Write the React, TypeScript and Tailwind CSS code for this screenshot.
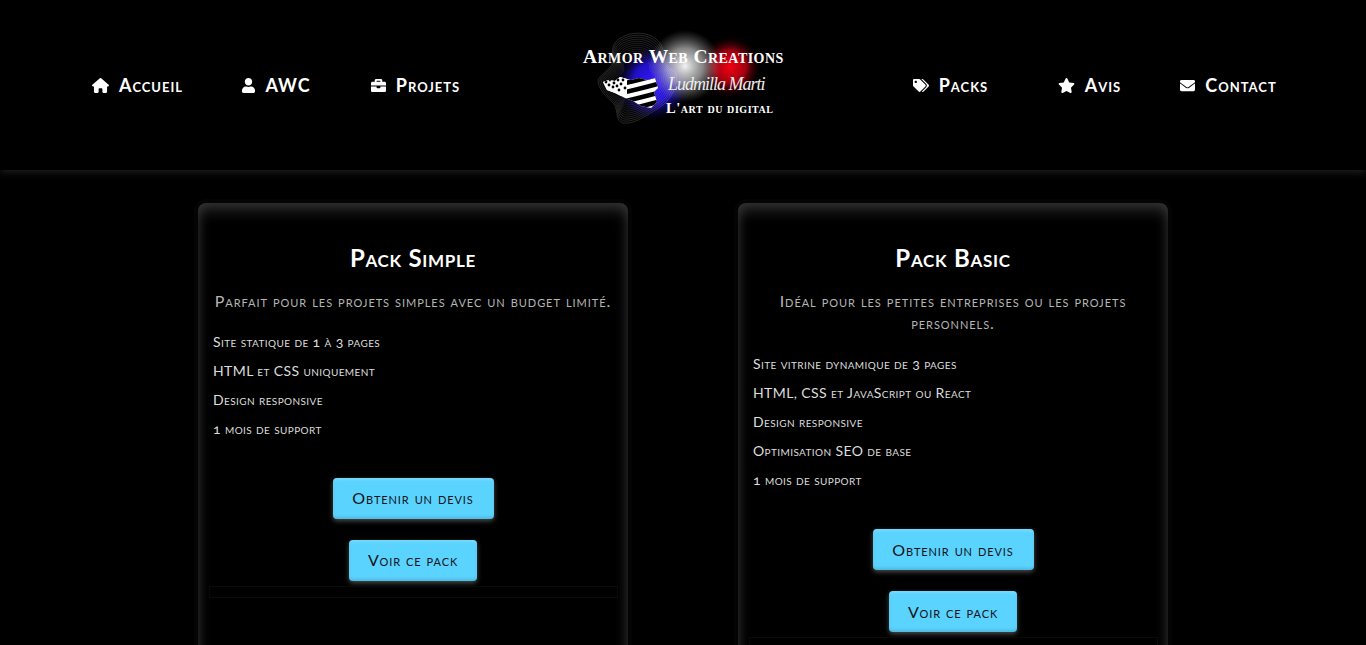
import React from 'react';
import { FaBriefcase, FaEnvelope, FaStar, FaTags, FaUser } from 'react-icons/fa';
import { FaHouse } from 'react-icons/fa6';

const leftLinks = [
  { label: 'Accueil', icon: FaHouse, iconClass: 'h-[15px] w-[17px]' },
  { label: 'AWC', icon: FaUser, iconClass: 'h-[15px] w-[13px]' },
  { label: 'Projets', icon: FaBriefcase, iconClass: 'h-[15px] w-[15px]' },
];

const rightLinks = [
  { label: 'Packs', icon: FaTags, iconClass: 'h-[13px] w-[16px]' },
  { label: 'Avis', icon: FaStar, iconClass: 'h-[15px] w-[17px]' },
  { label: 'Contact', icon: FaEnvelope, iconClass: 'h-[15px] w-[15px]' },
];

const packs = [
  {
    title: 'Pack Simple',
    description: 'Parfait pour les projets simples avec un budget limité.',
    features: ['Site statique de 1 à 3 pages', 'HTML et CSS uniquement', 'Design responsive', '1 mois de support'],
  },
  {
    title: 'Pack Basic',
    description: 'Idéal pour les petites entreprises ou les projets personnels.',
    features: [
      'Site vitrine dynamique de 3 pages',
      'HTML, CSS et JavaScript ou React',
      'Design responsive',
      'Optimisation SEO de base',
      '1 mois de support',
    ],
  },
];

function NavLink({
  label,
  icon: Icon,
  iconClass,
}: {
  label: string;
  icon: React.ComponentType<{ className?: string }>;
  iconClass: string;
}) {
  return (
    <a className="flex items-center justify-center gap-[10px] text-[18px] font-bold tracking-[1px] text-white">
      <Icon className={iconClass} />
      {label}
    </a>
  );
}

function Logo() {
  const contours = [0, 1, 2, 3, 4, 5, 6, 7, 8, 9, 10, 11];
  const spots = [
    [43, 62], [47, 60], [51, 63], [46, 65], [50, 67], [55, 60], [58, 64], [54, 66], [60, 60], [56, 70], [62, 68],
  ];
  return (
    <div className="relative mb-[10px] h-[120px] w-[240px] shrink-0 text-white">
      <svg viewBox="0 0 240 120" className="absolute inset-0 h-full w-full">
        <defs>
          <radialGradient id="blue">
            <stop offset="0" stopColor="#3418ff" />
            <stop offset="0.5" stopColor="#2010c4" />
            <stop offset="1" stopColor="#000" stopOpacity="0" />
          </radialGradient>
          <radialGradient id="white">
            <stop offset="0" stopColor="#fff" stopOpacity="0.95" />
            <stop offset="0.5" stopColor="#ccc" stopOpacity="0.65" />
            <stop offset="1" stopColor="#888" stopOpacity="0" />
          </radialGradient>
          <radialGradient id="red">
            <stop offset="0" stopColor="#f00012" />
            <stop offset="0.5" stopColor="#a00010" />
            <stop offset="1" stopColor="#000" stopOpacity="0" />
          </radialGradient>
          <clipPath id="breizh">
            <path d="M40 62 L46 60 L52 61 L57 57 L64 59 L68 60 L76 58 L84 60 L92 58 L95 68 L91 72 L94 82 L88 88 L78 86 L70 81 L62 78 L52 73 L44 70 Z" />
          </clipPath>
        </defs>
        <circle cx="90" cy="63" r="40" fill="url(#blue)" />
        <circle cx="167" cy="47" r="32" fill="url(#red)" />
        <circle cx="122" cy="46" r="36" fill="url(#white)" />
        {contours.map((i) => (
          <path
            key={i}
            fill="none"
            stroke="#fff"
            strokeOpacity="0.45"
            strokeWidth="0.35"
            transform={`translate(72 58) scale(${1 - i * 0.045}) translate(-72 -58)`}
            d="M52 23 C60 12 85 8 97 23 C104 34 96 42 110 50 C118 54 112 78 97 87 C85 95 70 105 60 103 C50 100 58 88 47 80 C38 72 32 62 37 57 C44 50 50 46 50 40 C50 34 48 28 52 23 Z"
          />
        ))}
        <g clipPath="url(#breizh)">
          <rect x="36" y="52" width="62" height="40" fill="#fff" />
          {[58, 67, 76, 85, 94].map((y) => (
            <path key={y} d={`M58 ${y + 6} Q76 ${y + 2} 98 ${y - 4}`} fill="none" stroke="#000" strokeWidth="4.5" />
          ))}
          <path d="M36 52 H64 V76 H36 Z" fill="#fff" />
          {spots.map(([cx, cy]) => (
            <circle key={`${cx}-${cy}`} cx={cx} cy={cy} r="1.4" fill="#000" />
          ))}
        </g>
      </svg>
      <span className="absolute left-[20px] top-[25px] whitespace-nowrap font-['Liberation_Serif',serif] text-[19.5px] font-bold leading-6 tracking-[0.45px]">
        Armor Web Creations
      </span>
      <span className="absolute left-[105px] top-[50px] whitespace-nowrap font-['Liberation_Serif',serif] text-[18px] font-light italic leading-7 tracking-[-1px] text-[#eeeeee] [font-variant-caps:normal]">
        Ludmilla Marti
      </span>
      <span className="absolute left-[103px] top-[80px] whitespace-nowrap font-['Liberation_Serif',serif] text-[14.5px] font-bold leading-4 tracking-[0.55px]">
        L'art du digital
      </span>
    </div>
  );
}

function PackCard({ title, description, features }: (typeof packs)[number]) {
  return (
    <article className="flex h-[520px] w-[430px] flex-col items-center rounded-lg bg-black px-[15px] pt-[41px] shadow-[inset_0_0_12px_rgba(255,255,255,0.1),inset_0_8px_14px_rgba(255,255,255,0.15),0_0_0_4px_#040404]">
      <h2 className="text-[24px] font-bold leading-7 tracking-[0.7px] text-white">{title}</h2>
      <p className="mt-[18px] text-center text-[16px] leading-[22.4px] tracking-[0.95px] text-[#b5b5b5]">{description}</p>
      <ul className="mt-[14.2px] flex w-full flex-col text-[14px] leading-[29px] tracking-[0.4px] text-[#dddddd]">
        {features.map((feature) => (
          <li key={feature}>{feature}</li>
        ))}
      </ul>
      <a className="mt-[35px] flex h-[41px] w-[161px] items-center justify-center rounded-[4px] bg-[#5ad3fe] text-[16px] tracking-[0.9px] text-[#101418] shadow-[inset_0_2px_3px_rgba(255,255,255,0.18),inset_0_-2px_3px_rgba(0,0,0,0.12),0_2px_5px_rgba(255,255,255,0.3)]">
        Obtenir un devis
      </a>
      <a className="mt-[21px] flex h-[41px] w-[128px] items-center justify-center rounded-[4px] bg-[#5ad3fe] text-[16px] tracking-[0.9px] text-[#101418] shadow-[inset_0_2px_3px_rgba(255,255,255,0.18),inset_0_-2px_3px_rgba(0,0,0,0.12),0_2px_5px_rgba(255,255,255,0.3)]">
        Voir ce pack
      </a>
      <div className="mt-[5px] h-[12px] w-[409px] shrink-0 border border-[#0a0a0a]" />
    </article>
  );
}

export default function App() {
  return (
    <div className="h-screen overflow-hidden bg-black font-['Lato',sans-serif] oldstyle-nums [font-variant-caps:small-caps]">
      <header className="flex h-[170px] items-center justify-between bg-black px-[68px] shadow-[0_2px_8px_rgba(255,255,255,0.13)]">
        <nav className="grid w-[417px] grid-cols-3">
          {leftLinks.map((link) => (
            <NavLink key={link.label} {...link} />
          ))}
        </nav>
        <Logo />
        <nav className="grid w-[417px] grid-cols-3">
          {rightLinks.map((link) => (
            <NavLink key={link.label} {...link} />
          ))}
        </nav>
      </header>
      <main className="mt-[33px] flex items-start justify-center gap-[110px]">
        {packs.map((pack) => (
          <PackCard key={pack.title} {...pack} />
        ))}
      </main>
    </div>
  );
}
